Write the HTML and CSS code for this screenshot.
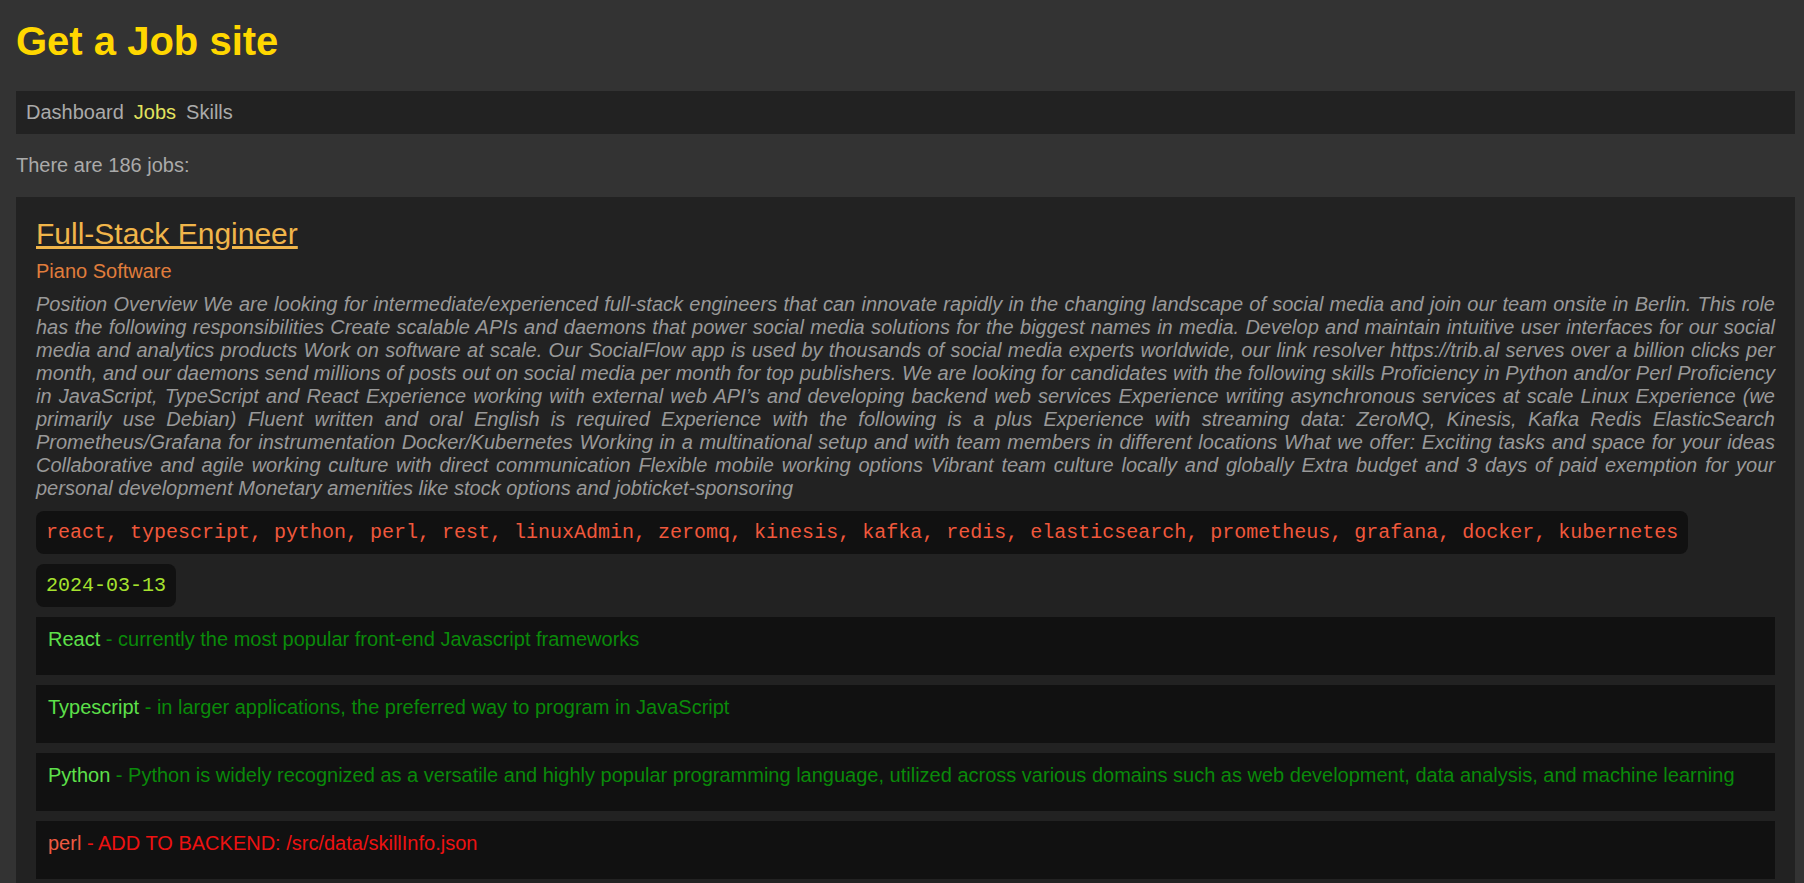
FILE: index.html
```html
<!DOCTYPE html>
<html lang="en">
<head>
<meta charset="utf-8">
<title>Get a Job site</title>
<link rel="stylesheet" href="styles.css">
</head>
<body>
<div class="page">
  <h1 class="site-title">Get a Job site</h1>
  <nav class="nav">
    <a class="nav-link" href="#">Dashboard</a>
    <a class="nav-link active" href="#">Jobs</a>
    <a class="nav-link" href="#">Skills</a>
  </nav>
  <p class="count">There are 186 jobs:</p>
  <div class="job">
    <h2 class="job-title"><a href="#">Full-Stack Engineer</a></h2>
    <div class="company">Piano Software</div>
    <div class="description">Position Overview We are looking for intermediate/experienced full-stack engineers that can innovate rapidly in the changing landscape of social media and join our team onsite in Berlin. This role has the following responsibilities Create scalable APIs and daemons that power social media solutions for the biggest names in media. Develop and maintain intuitive user interfaces for our social media and analytics products Work on software at scale. Our SocialFlow app is used by thousands of social media experts worldwide, our link resolver https://trib.al serves over a billion clicks per month, and our daemons send millions of posts out on social media per month for top publishers. We are looking for candidates with the following skills Proficiency in Python and/or Perl Proficiency in JavaScript, TypeScript and React Experience working with external web API’s and developing backend web services Experience writing asynchronous services at scale Linux Experience (we primarily use Debian) Fluent written and oral English is required Experience with the following is a plus Experience with streaming data: ZeroMQ, Kinesis, Kafka Redis ElasticSearch Prometheus/Grafana for instrumentation Docker/Kubernetes Working in a multinational setup and with team members in different locations What we offer: Exciting tasks and space for your ideas Collaborative and agile working culture with direct communication Flexible mobile working options Vibrant team culture locally and globally Extra budget and 3 days of paid exemption for your personal development Monetary amenities like stock options and jobticket-sponsoring</div>
    <div class="tags">react, typescript, python, perl, rest, linuxAdmin, zeromq, kinesis, kafka, redis, elasticsearch, prometheus, grafana, docker, kubernetes</div>
    <div class="date">2024-03-13</div>
    <div class="skill"><span class="skill-name">React</span><span class="skill-desc"> - currently the most popular front-end Javascript frameworks</span></div>
    <div class="skill"><span class="skill-name">Typescript</span><span class="skill-desc"> - in larger applications, the preferred way to program in JavaScript</span></div>
    <div class="skill"><span class="skill-name">Python</span><span class="skill-desc"> - Python is widely recognized as a versatile and highly popular programming language, utilized across various domains such as web development, data analysis, and machine learning</span></div>
    <div class="skill missing"><span class="skill-name">perl</span><span class="skill-desc"> - ADD TO BACKEND: /src/data/skillInfo.json</span></div>
  </div>
</div>
</body>
</html>
```
FILE: styles.css
```css
html, body {
  margin: 0;
  padding: 0;
  background: #333333;
}

body {
  font-family: "Liberation Sans", Arial, sans-serif;
  font-size: 20px;
  color: #aaaaaa;
}

.page {
  padding: 18px 9px 0 16px;
}

.site-title {
  margin: 0 0 27px;
  font-size: 40px;
  font-weight: bold;
  color: #ffd700;
  line-height: 46px;
}

.nav {
  display: flex;
  gap: 10px;
  padding: 10px;
  background: #222222;
  line-height: 23px;
}

.nav-link {
  color: #aaaaaa;
  text-decoration: none;
}

.nav-link.active {
  color: #e2e25e;
}

.count {
  margin: 20px 0;
  line-height: 23px;
}

.job {
  display: flex;
  flex-direction: column;
  align-items: flex-start;
  padding: 20px;
  background: #222222;
}

.job-title {
  margin: 0 0 8px;
  font-size: 30px;
  font-weight: normal;
  line-height: 34.5px;
}

.job-title a {
  color: #f0b54a;
  text-decoration: underline;
}

.company {
  margin-bottom: 10px;
  color: #e07d3c;
  line-height: 23px;
}

.description {
  align-self: stretch;
  margin-bottom: 11px;
  font-style: italic;
  color: #999999;
  text-align: justify;
  line-height: 23px;
}

.tags,
.date {
  font-family: "Liberation Mono", "Courier New", monospace;
  font-size: 20px;
  line-height: 23px;
  padding: 10px;
  background: #111111;
  border-radius: 8px;
  margin-bottom: 10px;
}

.tags {
  color: #f0583c;
}

.date {
  color: #a6e22e;
}

.skill {
  align-self: stretch;
  padding: 11px 12px 24px;
  margin-bottom: 10px;
  background: #111111;
  line-height: 23px;
}

.skill-name {
  color: #5de04a;
}

.skill-desc {
  color: #0a8a0a;
}

.skill.missing .skill-name {
  color: #ee5a42;
}

.skill.missing .skill-desc {
  color: #ee1111;
}
```
